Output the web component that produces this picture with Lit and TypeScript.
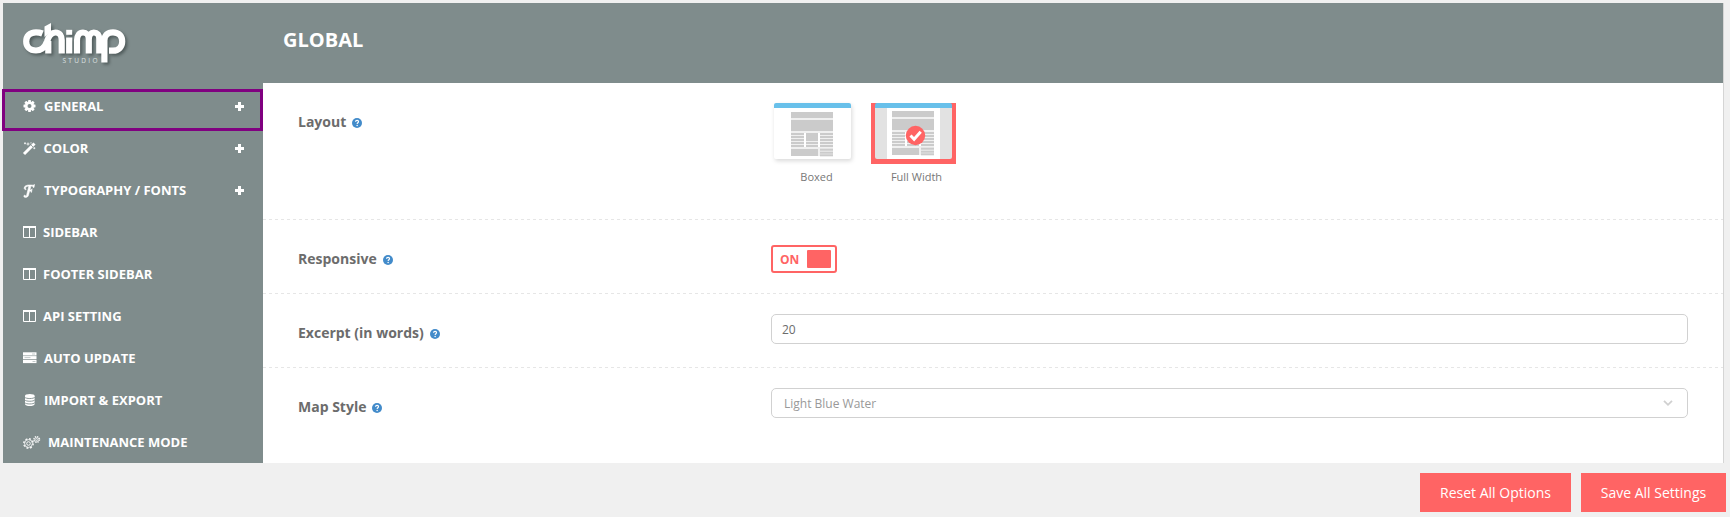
import { LitElement, html, svg, css } from "lit";
import { customElement } from "lit/decorators.js";

const lines = (x: number, w: number, ys: number[]) =>
  ys.map((y) => svg`<rect x=${x} y=${y} width=${w} height="2" fill="#cbcbcb"/>`);

const page = () => svg`
  <rect width="42" height="44" fill="#f0f0f0"/>
  <rect width="42" height="6" fill="#cbcbcb"/>
  <rect y="8" width="42" height="11" fill="#cbcbcb"/>
  <rect x="13" y="21" width="2" height="14" fill="#fff"/>
  <rect x="27" y="21" width="2" height="14" fill="#fff"/>
  ${lines(0, 13, [21, 24, 27, 30, 33])}
  <rect x="15" y="21" width="12" height="8" fill="#cbcbcb"/>
  ${lines(15, 12, [30, 33])}
  ${lines(29, 13, [21, 24, 27, 30, 33])}
  <rect y="37" width="27" height="7" fill="#cbcbcb"/>
  ${lines(29, 13, [36.700, 39.700, 42.300])}`;

const icons: Record<string, unknown> = {
  gear: svg`<g transform="translate(6.500 6)" fill="#fff">
    ${[0, 45, 90, 135].map((a) => svg`<rect x="-1.400" y="-6" width="2.800" height="12" rx=".4" transform=${`rotate(${a})`}/>`)}
    <circle r="4.500"/><circle r="2" fill="#7f8c8c"/></g>`,
  wand: svg`<path d="M1 12 9 4" stroke="#fff" stroke-width="3"/><path d="M9 4 11.500 1.500" stroke="#fff" stroke-width="3"/><path d="M8 3l2 2" stroke="#7f8c8c" stroke-width=".7"/><path d="M2 .300v2M1 1.300h2M5 .500v3M3.500 2h3M8 .200v1.400M11.300 5.200v2M10.300 6.200h2" stroke="#fff" stroke-width=".8"/>`,
  font: svg`<path d="M11.500.5 11 3.500h-.7c-.2-1-.9-1.400-2.400-1.400L6.900 6h1.300l.9-1.200-.6 3.500H8L7.800 7H6.600L5.500 11.200c-.5 1.600-1.600 2.200-2.900 2.200C1.700 13.400.800 13 .8 12.200c0-.7.500-1 .9-1 .6 0 .9.400.8 1.100.600-.1.900-.5 1.200-1.600L5.900 2.100C4 2.200 2.500 3 2.500 4.200c0 .5.300.8.7.9l-.5.700C1.700 5.600 1.200 4.900 1.200 4.100 1.200 1.900 3.600 1 6.500 1c2 0 4 .5 5-.5z" fill="#fff" stroke="#fff" stroke-width=".6"/>`,
  columns: svg`<path d="M.500.500h12v11H.500zM6.500.500v11" fill="none" stroke="#fff" stroke-width="1"/><rect width="13" height="2" fill="#fff"/>`,
  server: svg`<rect y=".3" width="13.500" height="3.200" fill="#fff"/><rect y="4.100" width="13.500" height="3" fill="#fff"/><rect y="7.800" width="13.500" height="3.300" fill="#fff"/><path d="M9 2h3M1.500 5.600h6M9.500 9.500h3" stroke="#b4bcbc" stroke-width=".8"/>`,
  database: svg`<path d="M2 2v8c0 2.700 9.600 2.700 9.600 0v-8" fill="#fff"/><ellipse cx="6.800" cy="1.900" rx="4.800" ry="1.900" fill="#fff"/><path d="M1.800 3.200c1 1.800 9 1.800 10 0M1.800 5.900c1 1.800 9 1.800 10 0M1.800 8.600c1 1.800 9 1.800 10 0" fill="none" stroke="#7f8c8c" stroke-width=".9"/>`,
  gears: svg`<g fill="none" stroke="#fff"><circle cx="5.500" cy="7.500" r="4.700" stroke-width="1.500" stroke-dasharray="1.900 1.791" opacity=".9"/><circle cx="5.500" cy="7.500" r="3.900" stroke-width=".8"/><circle cx="5.500" cy="7.500" r="1.800" stroke-width=".9"/><circle cx="13.700" cy="3.500" r="2.900" stroke-width="1.300" stroke-dasharray="1.300 .978" opacity=".9"/><circle cx="13.700" cy="3.500" r="2.200" stroke-width=".6"/><circle cx="13.700" cy="3.500" r="1" stroke-width=".7"/></g>`,
};

const menu = [
  { icon: "gear", label: "GENERAL", gap: 8, plus: true, active: true },
  { icon: "wand", label: "COLOR", gap: 7.5, plus: true },
  { icon: "font", label: "TYPOGRAPHY / FONTS", gap: 8, plus: true },
  { icon: "columns", label: "SIDEBAR", gap: 7 },
  { icon: "columns", label: "FOOTER SIDEBAR", gap: 7 },
  { icon: "columns", label: "API SETTING", gap: 7 },
  { icon: "server", label: "AUTO UPDATE", gap: 8 },
  { icon: "database", label: "IMPORT & EXPORT", gap: 8 },
  { icon: "gears", label: "MAINTENANCE MODE", gap: 8, wide: true },
];

@customElement("app-root")
export class AppRoot extends LitElement {
  static styles = css`
    :host { display: block; box-sizing: border-box; height: 517px; padding: 3px 4px 0 3px; background: #f0f0f0; font-family: "Open Sans", sans-serif; color: #6c6c6c; overflow: hidden; }
    * { box-sizing: border-box; }
    svg { display: block; flex: none; overflow: visible; }
    .panel { width: 1721px; height: 460px; border-right: 1px solid #d5d5d5; background: #fff; display: flex; flex-direction: column; }
    .header { height: 80px; flex: none; background: #7f8c8c; display: flex; }
    .brand { width: 260px; padding: 18px 0 0 17px; }
    .title { margin: 0; padding-left: 20px; font-size: 20px; line-height: 73px; font-weight: 700; color: #fff; }
    .body { flex: 1; display: flex; min-height: 0; }
    .side { width: 260px; background: #7f8c8c; padding-top: 6px; flex: none; }
    .item { height: 42px; display: flex; align-items: center; padding: 0 19px 8px 20px; color: #fff; font-size: 13px; font-weight: 700; white-space: nowrap; }
    .active { outline: 3px solid #800080; outline-offset: -3px; margin-left: -1px; padding-left: 21px; }
    .plus { margin-left: auto; }
    .main { flex: 1; }
    .row { height: 74px; display: flex; padding: 20px 35px 0 35px; background: repeating-linear-gradient(90deg, #e6e6e6 0 3px, transparent 3px 6px) bottom / 100% 1px no-repeat; }
    .tall { height: 137px; }
    .last { background: none; }
    .label { width: 473px; flex: none; display: flex; align-items: center; gap: 6px; height: 36px; font-size: 14px; font-weight: 700; }
    .label svg { margin-top: 3px; }
    .field { height: 30px; flex: 1; border: 1px solid #d1d1d1; border-radius: 5px; font-size: 12px; line-height: 29px; padding: 0 10px; }
    .select { display: flex; justify-content: space-between; align-items: center; padding: 0 14px 0 12px; color: #999; }
    .toggle { width: 66px; height: 28px; border: 2px solid #ff6464; border-radius: 3px; display: flex; justify-content: space-between; align-items: center; padding: 0 4px 0 7px; color: #ff6464; font-size: 12px; font-weight: 700; margin-top: 5px; }
    .knob { width: 24px; height: 18px; background: #ff6464; border-radius: 1px; }
    .options { display: flex; gap: 15px; font-size: 11px; }
    .option { width: 85px; text-align: center; color: #777; }
    .option svg { margin-bottom: 5px; }
    .caption { padding-left: 6px; }
    .footer { display: flex; justify-content: flex-end; gap: 10px; padding-top: 10px; }
    .button { height: 39px; width: 151px; background: #ff6464; color: #fff; font: 14px/40px "Open Sans", sans-serif; border: 0; padding: 0; text-align: center; }
    .save { width: 145px; }
  `;

  help() {
    return html`<svg width="10" height="10" viewBox="0 0 10 10"><circle cx="5" cy="5" r="5" fill="#428bca"/><path d="M3.500 3.800C3.700 1.900 6.700 2.100 6.500 3.800 6.400 4.700 5.200 4.700 5.100 5.900" fill="none" stroke="#fff" stroke-width="1.200"/><circle cx="5.100" cy="7.600" r=".75" fill="#fff"/></svg>`;
  }

  logo() {
    return html`<svg width="112" height="52" viewBox="0 0 112 52" role="img" aria-label="Chimp Studio">
      <g fill="none" stroke="#fff" stroke-width="6.200" style="filter: drop-shadow(2px 2px 1.500px rgba(50,60,60,.6))">
        <path d="M22.500 12.500Q19.500 11.300 16 11.300C9.500 11.300 6.200 15.500 6.200 20.500S9.500 29.500 16 29.500C22 29.500 25 26 27 20.500 29 14 31.500 11.500 35.500 11.500 40 11.500 41.700 15 41.700 19v13.500M28.300 20v12.500"/>
        <path d="M24.500 10V5.500L31 2v8.500L24.500 16z" fill="#fff" stroke="none"/>
        <path d="M49.200 16.500v16M57 32.500V19.500c0-5 2.500-8 6-8s5.800 3 5.800 6.500v14.500M68.800 18c.3-4.500 2.500-6.500 5-6.500 3.500 0 5.500 2.500 5.500 6.500v14.500"/>
        <path d="M84.400 41.500V19.500c0-5 3-8.200 8.600-8.200 6 0 9.200 4 9.200 9.200s-3.400 9.200-9.200 9.200H89" />
        <path d="M46.200 8.800h6v5h-6z" fill="#fff" stroke="none"/>
      </g>
      <text x="42.500" y="41.500" font-size="6.500" textLength="35" fill="#dde1e1">STUDIO</text>
    </svg>`;
  }

  thumb(full: boolean) {
    return html`<svg width="85" height="61" viewBox="0 0 85 61">
      ${full
        ? svg`<path d="M0 0h85v61H0z" fill="#ff6464"/><path d="M4 5h77v49a2 2 0 0 1-2 2H6a2 2 0 0 1-2-2z" fill="#e2e2e2"/><path d="M16 5h53v51H16z" fill="#fff"/>`
        : svg`<rect x="3" y="0" width="77" height="56" rx="2" fill="#fff" style="filter: drop-shadow(1px 2px 2px rgba(0,0,0,.15))"/>`}
      <path d=${full ? "M4 5V2a2 2 0 0 1 2-2h73a2 2 0 0 1 2 2v3z" : "M3 5V2a2 2 0 0 1 2-2h73a2 2 0 0 1 2 2v3z"} fill="#68c0ea"/>
      <g transform=${full ? "translate(21 8)" : "translate(20 9)"}>${page()}</g>
      ${full ? svg`<circle cx="44.500" cy="32.500" r="9.700" fill="#ff6464"/><path d="m39.500 32.500 3.600 3.700 6.600-7.400" fill="none" stroke="#fff" stroke-width="3"/>` : ""}
    </svg>`;
  }

  render() {
    return html`
      <div class="panel">
        <div class="header"><div class="brand">${this.logo()}</div><h1 class="title">GLOBAL</h1></div>
        <div class="body">
          <nav class="side">
            ${menu.map((m) => html`<div class="item ${m.active ? "active" : ""}">
              <svg width=${m.wide ? 17 : 13} height="13" viewBox=${m.wide ? "0 0 17 13" : "0 0 13 13"}>${icons[m.icon]}</svg>
              <span style="margin-left:${m.gap}px">${m.label}</span>
              ${m.plus ? html`<svg class="plus" width="9" height="9" viewBox="0 0 9 9"><path d="M4.500 0v9M0 4.500h9" stroke="#fff" stroke-width="3"/></svg>` : ""}
            </div>`)}
          </nav>
          <div class="main">
            <div class="row tall"><div class="label">Layout ${this.help()}</div>
              <div class="options">
                <div class="option">${this.thumb(false)}<div class="caption">Boxed</div></div>
                <div class="option">${this.thumb(true)}<div class="caption">Full Width</div></div>
              </div></div>
            <div class="row"><div class="label">Responsive ${this.help()}</div><div class="toggle">ON<span class="knob"></span></div></div>
            <div class="row"><div class="label">Excerpt (in words) ${this.help()}</div><div class="field">20</div></div>
            <div class="row last"><div class="label">Map Style ${this.help()}</div>
              <div class="field select">Light Blue Water<svg width="10" height="6" viewBox="0 0 10 6"><path d="m1 .8 4 4 4-4" fill="none" stroke="#d0d0d0" stroke-width="1.800"/></svg></div></div>
          </div>
        </div>
      </div>
      <div class="footer"><button class="button">Reset All Options</button><button class="button save">Save All Settings</button></div>`;
  }
}
